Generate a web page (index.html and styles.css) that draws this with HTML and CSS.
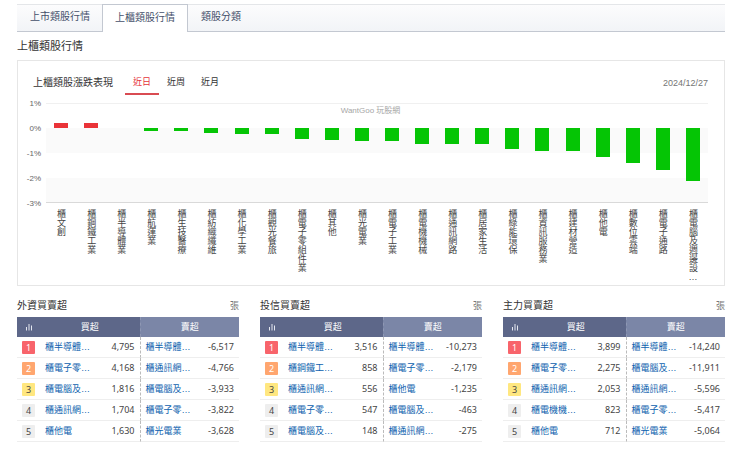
FILE: index.html
```html
<!DOCTYPE html>
<html lang="zh-Hant">
<head>
<meta charset="utf-8">
<meta name="viewport" content="width=device-width, initial-scale=1">
<title>上櫃類股行情</title>
<link rel="stylesheet" href="styles.css">
</head>
<body>
<nav class="tabs">
  <a class="tab" href="#listed">上市類股行情</a>
  <a class="tab tab-active" href="#otc" aria-current="page">上櫃類股行情</a>
  <a class="tab" href="#groups">類股分類</a>
</nav>
<main>
  <h1 class="page-title">上櫃類股行情</h1>

  <section class="card">
    <header class="card-head">
      <h2 class="card-title">上櫃類股漲跌表現</h2>
      <div class="periods">
        <button class="period period-active" type="button">近日</button>
        <button class="period" type="button">近周</button>
        <button class="period" type="button">近月</button>
      </div>
      <time class="date" datetime="2024-12-27">2024/12/27</time>
    </header>
    <div class="chart">
      <div class="axis"><span>1%</span><span>0%</span><span>-1%</span><span>-2%</span><span>-3%</span></div>
      <div class="plot">
        <span class="watermark">WantGoo 玩股網</span>
        <div class="col"><div class="track"><i class="bar up" style="--v:.19"></i></div><span class="name">櫃文創</span></div>
        <div class="col"><div class="track"><i class="bar up" style="--v:.19"></i></div><span class="name">櫃鋼鐵工業</span></div>
        <div class="col"><div class="track"><i class="bar" style="--v:0"></i></div><span class="name">櫃半導體業</span></div>
        <div class="col"><div class="track"><i class="bar" style="--v:.1"></i></div><span class="name">櫃航運業</span></div>
        <div class="col"><div class="track"><i class="bar" style="--v:.13"></i></div><span class="name">櫃生技醫療</span></div>
        <div class="col"><div class="track"><i class="bar" style="--v:.2"></i></div><span class="name">櫃紡織纖維</span></div>
        <div class="col"><div class="track"><i class="bar" style="--v:.22"></i></div><span class="name">櫃化學工業</span></div>
        <div class="col"><div class="track"><i class="bar" style="--v:.25"></i></div><span class="name">櫃觀光餐旅</span></div>
        <div class="col"><div class="track"><i class="bar" style="--v:.43"></i></div><span class="name">櫃電子零組件業</span></div>
        <div class="col"><div class="track"><i class="bar" style="--v:.48"></i></div><span class="name">櫃其他</span></div>
        <div class="col"><div class="track"><i class="bar" style="--v:.51"></i></div><span class="name">櫃光電業</span></div>
        <div class="col"><div class="track"><i class="bar" style="--v:.51"></i></div><span class="name">櫃電子工業</span></div>
        <div class="col"><div class="track"><i class="bar" style="--v:.63"></i></div><span class="name">櫃電機機械</span></div>
        <div class="col"><div class="track"><i class="bar" style="--v:.63"></i></div><span class="name">櫃通訊網路</span></div>
        <div class="col"><div class="track"><i class="bar" style="--v:.63"></i></div><span class="name">櫃居家生活</span></div>
        <div class="col"><div class="track"><i class="bar" style="--v:.85"></i></div><span class="name">櫃綠能環保</span></div>
        <div class="col"><div class="track"><i class="bar" style="--v:.92"></i></div><span class="name">櫃資訊服務業</span></div>
        <div class="col"><div class="track"><i class="bar" style="--v:.92"></i></div><span class="name">櫃建材營造</span></div>
        <div class="col"><div class="track"><i class="bar" style="--v:1.17"></i></div><span class="name">櫃他電</span></div>
        <div class="col"><div class="track"><i class="bar" style="--v:1.4"></i></div><span class="name">櫃數位雲端</span></div>
        <div class="col"><div class="track"><i class="bar" style="--v:1.66"></i></div><span class="name">櫃電子通路</span></div>
        <div class="col"><div class="track"><i class="bar" style="--v:2.1"></i></div><span class="name">櫃電腦及週邊設…</span></div>
      </div>
    </div>
  </section>

  <div class="boards">
    <section class="board">
      <header class="board-head"><h2 class="board-title" id="foreign">外資買賣超</h2><span class="unit">張</span></header>
      <table class="rank" aria-labelledby="foreign">
        <colgroup><col class="c-no"><col class="c-name"><col class="c-value"><col class="c-name"><col class="c-value"></colgroup>
        <thead><tr><th><svg class="icon" viewBox="0 0 8 8" aria-hidden="true"><path d="M1.5 7.5V4M4 7.5V1M6.5 7.5V2.5"/></svg></th><th colspan="2">買超</th><th colspan="2" class="sell">賣超</th></tr></thead>
        <tbody>
          <tr><td><b class="no no1">1</b></td><td><a href="#s">櫃半導體…</a></td><td class="value">4,795</td><td class="split"><a href="#s">櫃半導體…</a></td><td class="value">-6,517</td></tr>
          <tr><td><b class="no no2">2</b></td><td><a href="#s">櫃電子零…</a></td><td class="value">4,168</td><td class="split"><a href="#s">櫃通訊網…</a></td><td class="value">-4,766</td></tr>
          <tr><td><b class="no no3">3</b></td><td><a href="#s">櫃電腦及…</a></td><td class="value">1,816</td><td class="split"><a href="#s">櫃電腦及…</a></td><td class="value">-3,933</td></tr>
          <tr><td><b class="no">4</b></td><td><a href="#s">櫃通訊網…</a></td><td class="value">1,704</td><td class="split"><a href="#s">櫃電子零…</a></td><td class="value">-3,822</td></tr>
          <tr><td><b class="no">5</b></td><td><a href="#s">櫃他電</a></td><td class="value">1,630</td><td class="split"><a href="#s">櫃光電業</a></td><td class="value">-3,628</td></tr>
        </tbody>
      </table>
    </section>
    <section class="board">
      <header class="board-head"><h2 class="board-title" id="trust">投信買賣超</h2><span class="unit">張</span></header>
      <table class="rank" aria-labelledby="trust">
        <colgroup><col class="c-no"><col class="c-name"><col class="c-value"><col class="c-name"><col class="c-value"></colgroup>
        <thead><tr><th><svg class="icon" viewBox="0 0 8 8" aria-hidden="true"><path d="M1.5 7.5V4M4 7.5V1M6.5 7.5V2.5"/></svg></th><th colspan="2">買超</th><th colspan="2" class="sell">賣超</th></tr></thead>
        <tbody>
          <tr><td><b class="no no1">1</b></td><td><a href="#s">櫃半導體…</a></td><td class="value">3,516</td><td class="split"><a href="#s">櫃半導體…</a></td><td class="value">-10,273</td></tr>
          <tr><td><b class="no no2">2</b></td><td><a href="#s">櫃鋼鐵工…</a></td><td class="value">858</td><td class="split"><a href="#s">櫃電子零…</a></td><td class="value">-2,179</td></tr>
          <tr><td><b class="no no3">3</b></td><td><a href="#s">櫃通訊網…</a></td><td class="value">556</td><td class="split"><a href="#s">櫃他電</a></td><td class="value">-1,235</td></tr>
          <tr><td><b class="no">4</b></td><td><a href="#s">櫃電子零…</a></td><td class="value">547</td><td class="split"><a href="#s">櫃電腦及…</a></td><td class="value">-463</td></tr>
          <tr><td><b class="no">5</b></td><td><a href="#s">櫃電腦及…</a></td><td class="value">148</td><td class="split"><a href="#s">櫃通訊網…</a></td><td class="value">-275</td></tr>
        </tbody>
      </table>
    </section>
    <section class="board">
      <header class="board-head"><h2 class="board-title" id="major">主力買賣超</h2><span class="unit">張</span></header>
      <table class="rank" aria-labelledby="major">
        <colgroup><col class="c-no"><col class="c-name"><col class="c-value"><col class="c-name"><col class="c-value"></colgroup>
        <thead><tr><th><svg class="icon" viewBox="0 0 8 8" aria-hidden="true"><path d="M1.5 7.5V4M4 7.5V1M6.5 7.5V2.5"/></svg></th><th colspan="2">買超</th><th colspan="2" class="sell">賣超</th></tr></thead>
        <tbody>
          <tr><td><b class="no no1">1</b></td><td><a href="#s">櫃半導體…</a></td><td class="value">3,899</td><td class="split"><a href="#s">櫃半導體…</a></td><td class="value">-14,240</td></tr>
          <tr><td><b class="no no2">2</b></td><td><a href="#s">櫃電子零…</a></td><td class="value">2,275</td><td class="split"><a href="#s">櫃電腦及…</a></td><td class="value">-11,911</td></tr>
          <tr><td><b class="no no3">3</b></td><td><a href="#s">櫃通訊網…</a></td><td class="value">2,053</td><td class="split"><a href="#s">櫃通訊網…</a></td><td class="value">-5,596</td></tr>
          <tr><td><b class="no">4</b></td><td><a href="#s">櫃電機機…</a></td><td class="value">823</td><td class="split"><a href="#s">櫃電子零…</a></td><td class="value">-5,417</td></tr>
          <tr><td><b class="no">5</b></td><td><a href="#s">櫃他電</a></td><td class="value">712</td><td class="split"><a href="#s">櫃光電業</a></td><td class="value">-5,064</td></tr>
        </tbody>
      </table>
    </section>
  </div>
</main>
</body>
</html>
```
FILE: styles.css
```css
* { box-sizing: border-box; }

body {
  margin: 0;
  padding: 4px 15px 8px 17px;
  background: #fff;
  color: #333;
  font: 9px/12px "Liberation Sans", "Noto Sans CJK TC", sans-serif;
}

h1, h2 { margin: 0; font-weight: 400; }
a { text-decoration: none; }

/* Section tabs */
.tabs {
  display: flex;
  height: 28px;
  border-top: 1px solid #e4e6e9;
  border-bottom: 1px solid #c3c8d1;
  background: linear-gradient(#fcfcfd, #f2f4f7);
}
.tab {
  padding: 0 13px;
  color: #44506a;
  font-size: 10px;
  line-height: 24px;
}
.tab:first-child { padding-right: 12px; }
.tab-active {
  height: 28px;
  margin-top: -1px;
  padding: 0 12px;
  border: 1px solid #c3c8d1;
  border-bottom: 0;
  background: #fff;
  line-height: 26px;
}

.page-title { font-size: 11px; line-height: 28px; }

/* Chart card */
.card {
  padding: 10px 16px 12px 15px;
  border: 1px solid #e6e6e6;
}
.card-head { display: flex; align-items: center; height: 24px; }
.card-title { margin-right: 12px; font-size: 10px; }
.periods { display: flex; flex: 1; }
.period {
  height: 24px;
  padding: 0 8px;
  border: 0;
  border-bottom: 2px solid transparent;
  background: none;
  color: #333;
  font: inherit;
}
.period-active { border-color: #d94b52; color: #e5343a; }
.date { color: #757575; }

.chart { display: flex; padding-top: 8px; --unit: 25px; }
.axis {
  width: 8px;
  margin-top: -12px;
  display: flex;
  flex-direction: column;
  align-items: flex-end;
  color: #666;
  font-size: 8px;
  line-height: var(--unit);
}
.plot {
  position: relative;
  display: grid;
  flex: 1;
  grid-template-columns: repeat(22, 1fr);
  margin-left: 5px;
}
.watermark {
  position: absolute;
  top: 2px;
  right: 0;
  left: 0;
  padding-right: 13px;
  color: #a6a6a6;
  font-size: 8px;
  text-align: center;
}
.col { height: 170px; }
.track {
  height: 100px;
  border-bottom: 1px solid #d9d9d9;
  background:
    linear-gradient(#f0f0f0, #f0f0f0) 0 0 / 100% 1px no-repeat,
    linear-gradient(#fff 50%, #fafafa 50%) 0 0 / 100% 50px;
  padding-top: var(--unit);
}
.bar {
  display: block;
  width: 14px;
  height: calc(var(--v) * var(--unit));
  margin: 0 auto;
  background: #05c505;
}
.bar.up {
  margin-top: calc(var(--v) * var(--unit) * -1);
  background: #ea3338;
}
.name {
  display: block;
  margin: 6px auto 0;
  width: 12px;
  color: #444;
  writing-mode: vertical-rl;
  text-orientation: upright;
  white-space: nowrap;
}

/* Ranking tables */
.boards {
  display: grid;
  grid-template-columns: repeat(3, 1fr);
  gap: 21px;
  padding-top: 8px;
}
.board-head {
  display: flex;
  align-items: center;
  justify-content: space-between;
  height: 23px;
}
.board-title { font-size: 10px; }
.unit { color: #777; }
.rank {
  width: 100%;
  border-collapse: separate;
  border-spacing: 0;
  table-layout: fixed;
}
.c-no { width: 23px; }
.c-name { width: 28%; }
.rank th {
  height: 20px;
  padding: 0;
  background: #5d6789;
  color: #fff;
  font-weight: 400;
}
.rank .sell { border-left: 1px dashed #8e97b3; background: #7b86a7; }
.icon { display: block; width: 8px; height: 8px; margin: 0 auto; fill: none; stroke: #e4e7ef; }
.rank td {
  height: 21px;
  padding: 0 0 0 5px;
  border-bottom: 1px solid #eee;
  white-space: nowrap;
}
.rank td a { color: #0d5fae; }
.rank .split { border-left: 1px dashed #bbb; }
.rank .value {
  padding: 0 5px 0 0;
  color: #444;
  font-family: "Noto Sans", sans-serif;
  text-align: right;
}
.no {
  display: block;
  width: 13px;
  border-radius: 1px;
  background: #eee;
  color: #444;
  font-weight: 400;
  font-family: "Noto Sans", sans-serif;
  line-height: 13px;
  text-align: center;
}
.no1 { background: #f8646b; color: #fff; }
.no2 { background: #ffa66f; color: #fff; }
.no3 { background: #ffe780; }
```
